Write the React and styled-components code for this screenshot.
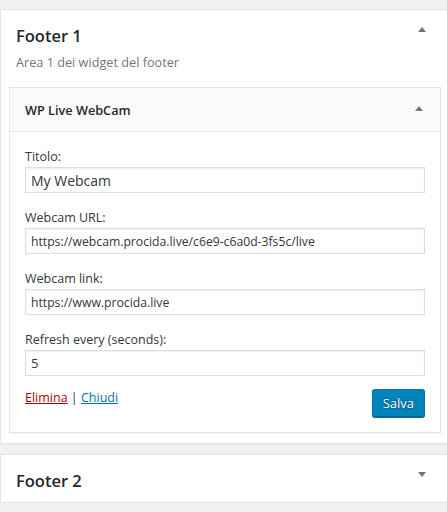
import styled, { createGlobalStyle } from "styled-components";

const GlobalStyle = createGlobalStyle`
    html, body {
        margin: 0;
        padding: 0;
        background: #f1f1f1;
        overflow: hidden;
    }
    body {
        font-family: "Open Sans", "Noto Sans", sans-serif;
        font-size: 13px;
        color: #444;
    }
`;

const fields = [
    { label: "Titolo:", value: "My Webcam", size: 14 },
    { label: "Webcam URL:", value: "https://webcam.procida.live/c6e9-c6a0d-3fs5c/live", size: 12.2 },
    { label: "Webcam link:", value: "https://www.procida.live", size: 12.2 },
    { label: "Refresh every (seconds):", value: "5", size: 13 },
];

export default function App(){
    return(
        <>
            <GlobalStyle/>
            <Page>
                <Sidebar $open>
                    <SidebarHead>
                        <h2>Footer 1</h2>
                        <Arrow/>
                    </SidebarHead>
                    <Description>Area 1 dei widget del footer</Description>

                    <Widget>
                        <WidgetTop>
                            <h3>WP Live WebCam</h3>
                            <Arrow/>
                        </WidgetTop>
                        <WidgetInside>
                            {fields.map((f) => (
                                <Field key={f.label}>
                                    <Label>{f.label}</Label>
                                    <Input $size={f.size} defaultValue={f.value}/>
                                </Field>
                            ))}
                            <Controls>
                                <Links>
                                    <a className="delete" href="#">Elimina</a>
                                    {" | "}
                                    <a className="close" href="#">Chiudi</a>
                                </Links>
                                <Button>Salva</Button>
                            </Controls>
                        </WidgetInside>
                    </Widget>
                </Sidebar>

                <Sidebar>
                    <SidebarHead $closed>
                        <h2>Footer 2</h2>
                        <Arrow $down/>
                    </SidebarHead>
                </Sidebar>
            </Page>
        </>
    );
}

const Page=styled.div`
    width: 447px;
    padding-top: 9px;
    display: flex;
    flex-direction: column;
    gap: 10px;
    overflow: hidden;
`;

const Sidebar=styled.div`
    width: 450px;
    box-sizing: border-box;
    background-color: #fff;
    border: 1px solid #e5e5e5;
    box-shadow: 0 1px 1px rgba(0,0,0,0.04);
    padding-bottom: ${(p) => (p.$open ? "10px" : "0")};
`;

const SidebarHead=styled.div`
    display: flex;
    align-items: flex-start;
    justify-content: space-between;
    padding: 14px 23px ${(p) => (p.$closed ? "9px" : "0")} 15px;

    h2{
        margin: 0;
        font-size: 16.5px;
        font-weight: 600;
        color: #23282d;
        line-height: 24px;
    }
`;

const Arrow=styled.span`
    width: 0;
    height: 0;
    border-left: 4px solid transparent;
    border-right: 4px solid transparent;
    ${(p) => p.$down
        ? "border-top: 5px solid #72777c;"
        : "border-bottom: 5px solid #72777c;"}
    margin-top: 3px;
`;

const Description=styled.p`
    margin: 5px 0 15px;
    padding: 0 15px;
    color: #72777c;
    font-size: 12.7px;
    line-height: 19px;
`;

const Widget=styled.div`
    margin: 0 8px;
    background-color: #fff;
    border: 1px solid #e5e5e5;
    box-shadow: 0 1px 1px rgba(0,0,0,0.04);
`;

const WidgetTop=styled.div`
    height: 43px;
    background-color: #fafafa;
    border-bottom: 1px solid #e5e5e5;
    display: flex;
    align-items: center;
    justify-content: space-between;
    padding: 0 17px 0 15px;

    h3{
        margin: 0;
        font-size: 12.7px;
        font-weight: 600;
        color: #23282d;
    }

    span{
        margin-top: -2px;
    }
`;

const WidgetInside=styled.div`
    padding: 16px 15px 15px;
    display: flex;
    flex-direction: column;
`;

const Field=styled.div`
    display: flex;
    flex-direction: column;
    margin-bottom: 16px;
`;

const Label=styled.label`
    color: #32373c;
    font-size: 12.5px;
    line-height: 18px;
    margin-bottom: 1px;
`;

const Input=styled.input`
    height: 26px;
    box-sizing: border-box;
    border: 1px solid #ddd;
    box-shadow: inset 0 1px 2px rgba(0,0,0,0.07);
    background: #fff;
    color: #32373c;
    padding: 0 5px;
    font-family: inherit;
    font-size: ${(p) => p.$size}px;
    outline: none;
`;

const Controls=styled.div`
    display: flex;
    justify-content: space-between;
    align-items: flex-start;
    margin-top: -3px;
`;

const Links=styled.div`
    color: #32373c;
    font-size: 12.5px;
    line-height: 18px;

    a{
        text-decoration: underline;
    }
    .delete{
        color: #a00;
    }
    .close{
        color: #0073aa;
    }
`;

const Button=styled.button`
    height: 28px;
    padding: 0 10px 1px;
    font-family: inherit;
    font-size: 13px;
    color: #fff;
    background: #0085ba;
    border: 1px solid #0073aa;
    border-bottom-color: #006799;
    border-radius: 3px;
    box-shadow: 0 1px 0 #006799;
    text-shadow: 0 -1px 1px #006799, 1px 0 1px #006799, 0 1px 1px #006799, -1px 0 1px #006799;
    cursor: pointer;
`;
